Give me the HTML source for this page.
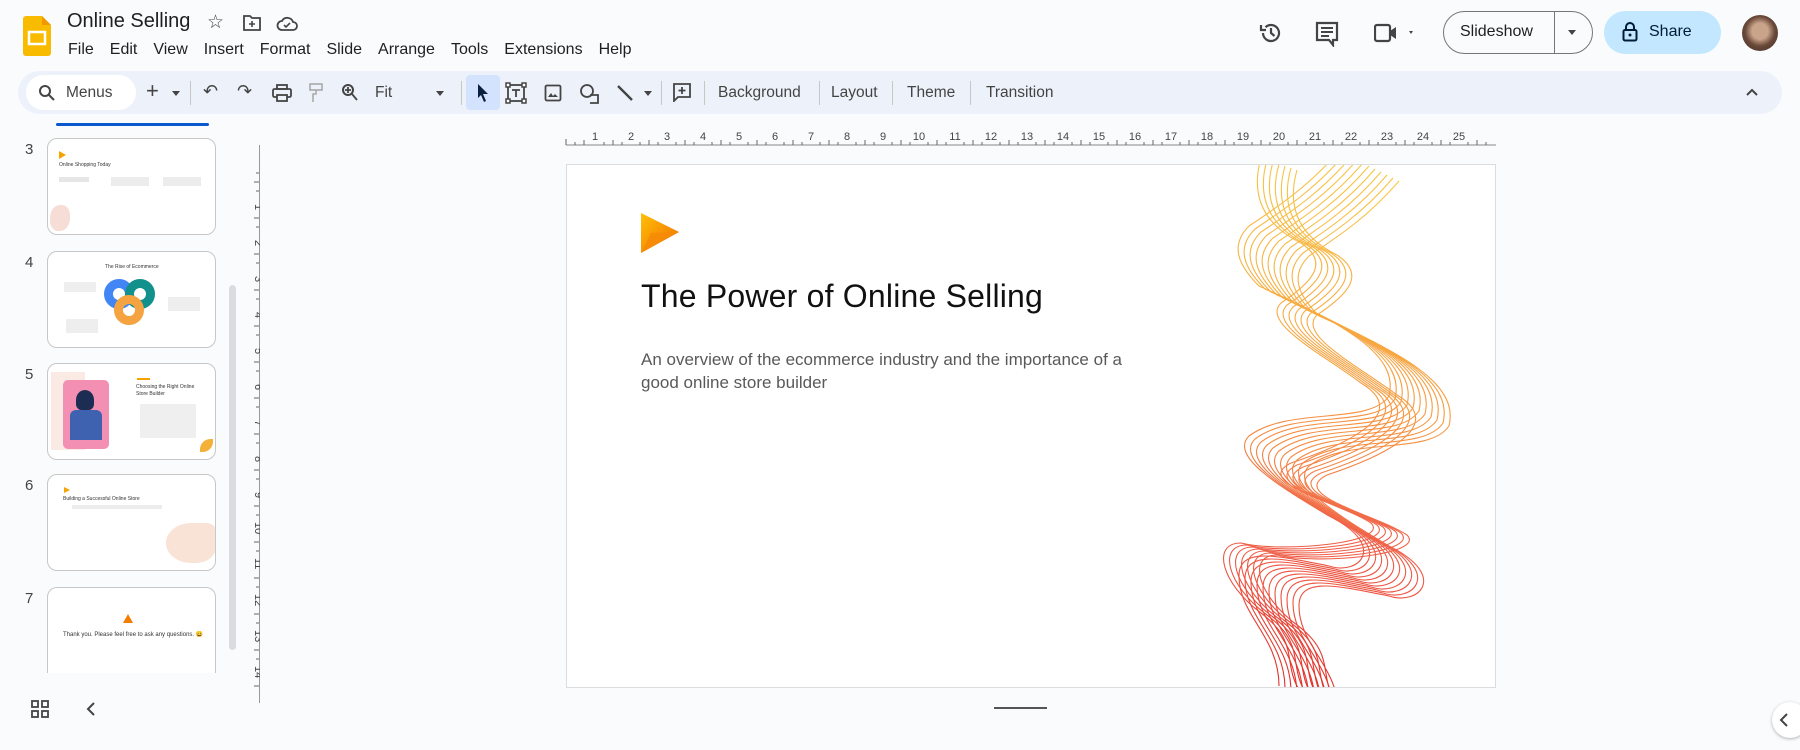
<!DOCTYPE html>
<html><head><meta charset="utf-8"><style>
*{box-sizing:border-box;margin:0;padding:0}
body{width:1800px;height:750px;overflow:hidden;background:#f9fbfd;font-family:"Liberation Sans",Arial,sans-serif;color:#1f1f1f;position:relative}
.a{position:absolute}
.menu span{margin-right:16px;font-size:16px}
.tb{left:18px;top:71px;width:1764px;height:43px;background:#edf2fa;border-radius:22px}
.ic{position:absolute;top:0}
.thumb{position:absolute;left:47px;width:169px;height:97px;background:#fff;border:1px solid #c7c7c7;border-radius:10px;overflow:hidden}
.num{position:absolute;left:25px;font-size:15px;color:#444}
.sep{position:absolute;top:10px;width:1px;height:24px;background:#c7c7c7}
.tt{position:absolute;top:13px;font-size:15.5px;color:#444}
</style></head><body>
<svg class="a" style="left:23px;top:16px" width="28" height="40" viewBox="0 0 28 40"><path d="M3 0h16l9 9v28a3 3 0 0 1-3 3H3a3 3 0 0 1-3-3V3a3 3 0 0 1 3-3z" fill="#f9bb00"/><path d="M19 0l9 9h-9z" fill="#f29900"/><rect x="6" y="16" width="16" height="12" fill="none" stroke="#fff" stroke-width="2.5"/></svg>
<div class="a" style="left:67px;top:10px;font-size:20px">Online Selling</div>
<div class="a" style="left:207px;top:11px;font-size:19px;color:#444">☆</div>
<svg class="a" style="left:242px;top:14px" width="20" height="18" viewBox="0 0 20 18"><path d="M2 2h6l2 2h8v12H2z" fill="none" stroke="#444" stroke-width="1.8"/><path d="M10 7v6M7 10h6" stroke="#444" stroke-width="1.6"/></svg>
<svg class="a" style="left:276px;top:14px" width="22" height="18" viewBox="0 0 22 18"><path d="M6 16h11a4 4 0 0 0 0-8 6 6 0 0 0-11-1A4.5 4.5 0 0 0 6 16z" fill="none" stroke="#444" stroke-width="1.8"/><path d="M8 11l2 2 4-4" fill="none" stroke="#444" stroke-width="1.6"/></svg>
<div class="a menu" style="left:68px;top:41px;white-space:nowrap"><span>File</span><span>Edit</span><span>View</span><span>Insert</span><span>Format</span><span>Slide</span><span>Arrange</span><span>Tools</span><span>Extensions</span><span>Help</span></div>

<svg class="a" style="left:1259px;top:21px" width="24" height="24" viewBox="0 0 24 24"><path d="M4 12a8 8 0 1 0 2.5-5.8" fill="none" stroke="#444" stroke-width="2.2"/><path d="M2 4v5h5" fill="none" stroke="#444" stroke-width="2.2"/><path d="M12 7v5l3.5 3" fill="none" stroke="#444" stroke-width="2.2"/></svg>
<svg class="a" style="left:1315px;top:21px" width="24" height="26" viewBox="0 0 24 26"><path d="M2 2h20v17h-4v5l-4-5H2z" fill="none" stroke="#444" stroke-width="2.2"/><path d="M6 7h12M6 11h12M6 15h8" stroke="#444" stroke-width="2"/></svg>
<svg class="a" style="left:1374px;top:23px" width="40" height="20" viewBox="0 0 40 20"><rect x="1" y="2" width="15" height="16" rx="2" fill="none" stroke="#444" stroke-width="2.2"/><path d="M16 8l6-4v12l-6-4z" fill="#444"/><path d="M35 8l4 0-2 3z" fill="#444"/></svg>
<div class="a" style="left:1443px;top:11px;width:150px;height:43px;border:1px solid #747775;border-radius:22px"></div>
<div class="a" style="left:1460px;top:23px;font-size:16px;color:#1f1f1f">Slideshow</div>
<div class="a" style="left:1554px;top:12px;width:1px;height:41px;background:#747775"></div>
<div class="a" style="left:1568px;top:30px;border:4px solid transparent;border-top:5px solid #444"></div>
<div class="a" style="left:1604px;top:11px;width:117px;height:43px;background:#c2e7ff;border-radius:22px"></div>
<svg class="a" style="left:1622px;top:22px" width="16" height="20" viewBox="0 0 16 20"><rect x="1.5" y="8" width="13" height="10.5" rx="1.5" fill="none" stroke="#001d35" stroke-width="2"/><path d="M4 8V5a4 4 0 0 1 8 0v3" fill="none" stroke="#001d35" stroke-width="2"/><circle cx="8" cy="13" r="1.5" fill="#001d35"/></svg>
<div class="a" style="left:1649px;top:23px;font-size:16px;color:#001d35">Share</div>
<div class="a" style="left:1742px;top:15px;width:36px;height:36px;border-radius:50%;background:radial-gradient(circle at 50% 45%,#c9a38a 0 30%,#6b4a3a 55%,#3a2a22)"></div>

<div class="a tb">
 <div class="a" style="left:8px;top:4px;width:110px;height:35px;background:#fff;border-radius:18px"></div>
 <svg class="ic" style="left:20px;top:13px" width="18" height="18" viewBox="0 0 18 18"><circle cx="7" cy="7" r="5" fill="none" stroke="#444" stroke-width="2"/><path d="M11 11l5 5" stroke="#444" stroke-width="2"/></svg>
 <div class="tt" style="left:48px;color:#444">Menus</div>
 <div class="tt" style="left:128px;top:7px;font-size:22px;color:#444">+</div>
 <div class="a" style="left:154px;top:20px;border:4px solid transparent;border-top:5px solid #444"></div>
 <div class="sep" style="left:172px"></div>
 <div class="tt" style="left:185px;top:10px;font-size:18px;color:#444">↶</div>
 <div class="tt" style="left:219px;top:10px;font-size:18px;color:#444">↷</div>
 <svg class="ic" style="left:254px;top:13px" width="20" height="18" viewBox="0 0 20 18"><rect x="5" y="1" width="10" height="4" fill="none" stroke="#444" stroke-width="1.8"/><rect x="1" y="5" width="18" height="8" rx="1.5" fill="none" stroke="#444" stroke-width="1.8"/><rect x="5" y="11" width="10" height="6" fill="#edf2fa" stroke="#444" stroke-width="1.8"/></svg>
 <svg class="ic" style="left:290px;top:12px" width="16" height="20" viewBox="0 0 16 20"><rect x="2" y="1" width="12" height="6" fill="none" stroke="#aaa" stroke-width="1.6"/><path d="M8 7v4H5v8" fill="none" stroke="#aaa" stroke-width="1.6"/></svg>
 <svg class="ic" style="left:323px;top:12px" width="18" height="20" viewBox="0 0 18 20"><circle cx="7" cy="7" r="5" fill="none" stroke="#444" stroke-width="2"/><path d="M11 11l5 6M7 4v6M4 7h6" stroke="#444" stroke-width="1.8"/></svg>
 <div class="tt" style="left:357px;color:#444">Fit</div>
 <div class="a" style="left:418px;top:20px;border:4px solid transparent;border-top:5px solid #444"></div>
 <div class="sep" style="left:443px"></div>
 <div class="a" style="left:448px;top:4px;width:34px;height:35px;background:#d3e3fd;border-radius:4px"></div>
 <svg class="ic" style="left:458px;top:12px" width="14" height="20" viewBox="0 0 14 20"><path d="M2 1l10 10H7l3 7-2 1-3-7-3 3z" fill="#0b1f3f"/></svg>
 <svg class="ic" style="left:487px;top:11px" width="22" height="22" viewBox="0 0 22 22"><rect x="3" y="3" width="16" height="16" fill="none" stroke="#444" stroke-width="1.8"/><rect x="1" y="1" width="4" height="4" fill="#fff" stroke="#444" stroke-width="1.5"/><rect x="17" y="1" width="4" height="4" fill="#fff" stroke="#444" stroke-width="1.5"/><rect x="1" y="17" width="4" height="4" fill="#fff" stroke="#444" stroke-width="1.5"/><rect x="17" y="17" width="4" height="4" fill="#fff" stroke="#444" stroke-width="1.5"/><path d="M7 8h8M11 8v7" stroke="#444" stroke-width="1.8"/></svg>
 <svg class="ic" style="left:526px;top:13px" width="18" height="18" viewBox="0 0 18 18"><rect x="1.5" y="1.5" width="15" height="15" rx="1.5" fill="none" stroke="#444" stroke-width="1.8"/><path d="M4 13l3-4 2 3 2-2 3 3z" fill="#444"/></svg>
 <svg class="ic" style="left:561px;top:12px" width="22" height="22" viewBox="0 0 22 22"><circle cx="8" cy="8" r="6" fill="none" stroke="#444" stroke-width="1.8"/><path d="M11 12h8v8h-8" fill="none" stroke="#444" stroke-width="1.8"/></svg>
 <svg class="ic" style="left:598px;top:13px" width="18" height="18" viewBox="0 0 18 18"><path d="M2 2l14 14" stroke="#444" stroke-width="2.4"/></svg>
 <div class="a" style="left:626px;top:20px;border:4px solid transparent;border-top:5px solid #444"></div>
 <div class="sep" style="left:643px"></div>
 <svg class="ic" style="left:654px;top:11px" width="20" height="20" viewBox="0 0 20 20"><path d="M2 2h16v13H6l-4 4z" fill="none" stroke="#444" stroke-width="1.8"/><path d="M10 5v7M6.5 8.5h7" stroke="#444" stroke-width="1.8"/></svg>
 <div class="sep" style="left:686px"></div>
 <div class="tt" style="left:700px">Background</div>
 <div class="sep" style="left:801px"></div>
 <div class="tt" style="left:813px">Layout</div>
 <div class="sep" style="left:874px"></div>
 <div class="tt" style="left:889px">Theme</div>
 <div class="sep" style="left:952px"></div>
 <div class="tt" style="left:968px">Transition</div>
 <svg class="ic" style="left:1727px;top:16px" width="14" height="10" viewBox="0 0 14 10"><path d="M2 8l5-5 5 5" fill="none" stroke="#444" stroke-width="2"/></svg>
</div>

<div class="a" style="left:56px;top:123px;width:153px;height:3px;background:#0b57d0;border-radius:2px"></div>
<div class="num" style="top:141px">3</div>
<div class="thumb" style="top:138px">
 <div class="a" style="left:11px;top:12px;border:4px solid transparent;border-left:7px solid #f4a300"></div>
 <div class="a" style="left:11px;top:23px;font-size:5px;color:#333">Online Shopping Today</div>
 <div class="a" style="left:11px;top:38px;width:30px;height:5px;background:#e6e6e6"></div>
 <div class="a" style="left:63px;top:38px;width:38px;height:9px;background:#ececec"></div>
 <div class="a" style="left:115px;top:38px;width:38px;height:9px;background:#ececec"></div>
 <div class="a" style="left:2px;top:66px;width:20px;height:26px;background:#f6ddd6;border-radius:50% 40% 50% 40%"></div>
</div>
<div class="num" style="top:254px">4</div>
<div class="thumb" style="top:251px">
 <div class="a" style="left:57px;top:12px;font-size:5px;color:#333">The Rise of Ecommerce</div>
 <div class="a" style="left:56px;top:27px;width:30px;height:30px;border-radius:50%;border:9px solid #4285f4"></div>
 <div class="a" style="left:77px;top:27px;width:30px;height:30px;border-radius:50%;border:9px solid #11908c"></div>
 <div class="a" style="left:66px;top:43px;width:30px;height:30px;border-radius:50%;border:9px solid #f4a340"></div>
 <div class="a" style="left:16px;top:30px;width:32px;height:10px;background:#eee"></div>
 <div class="a" style="left:18px;top:67px;width:32px;height:14px;background:#eee"></div>
 <div class="a" style="left:120px;top:45px;width:32px;height:14px;background:#eee"></div>
</div>
<div class="num" style="top:366px">5</div>
<div class="thumb" style="top:363px">
 <div class="a" style="left:3px;top:8px;width:34px;height:78px;background:#fbeae4"></div>
 <div class="a" style="left:15px;top:16px;width:46px;height:69px;background:#f28fb2;border-radius:5px"></div>
 <div class="a" style="left:28px;top:26px;width:18px;height:20px;background:#1d2c52;border-radius:50% 50% 30% 30%"></div>
 <div class="a" style="left:22px;top:46px;width:32px;height:30px;background:#3e61b0;border-radius:6px 6px 0 0"></div>
 <div class="a" style="left:89px;top:14px;width:13px;height:2px;background:#f4a300"></div>
 <div class="a" style="left:88px;top:20px;font-size:5px;color:#333;line-height:7px">Choosing the Right Online<br>Store Builder</div>
 <div class="a" style="left:92px;top:40px;width:56px;height:34px;background:#efefef"></div>
 <div class="a" style="left:152px;top:75px;width:13px;height:13px;background:#f4b13a;border-radius:80% 0 80% 0"></div>
</div>
<div class="num" style="top:477px">6</div>
<div class="thumb" style="top:474px">
 <div class="a" style="left:16px;top:12px;border:3px solid transparent;border-left:6px solid #f4a300"></div>
 <div class="a" style="left:15px;top:21px;font-size:5px;color:#333">Building a Successful Online Store</div>
 <div class="a" style="left:24px;top:30px;width:90px;height:4px;background:#ececec"></div>
 <div class="a" style="left:118px;top:48px;width:50px;height:40px;background:#f9e2d6;border-radius:50% 20% 40% 50%"></div>
</div>
<div class="num" style="top:590px">7</div>
<div class="thumb" style="top:587px;height:86px;border-bottom:none;border-radius:10px 10px 0 0">
 <div class="a" style="left:75px;top:21px;border:5px solid transparent;border-bottom:9px solid #f47c00"></div>
 <div class="a" style="left:15px;top:43px;font-size:6px;color:#333">Thank you. Please feel free to ask any questions. 😀</div>
</div>
<div class="a" style="left:229px;top:285px;width:7px;height:365px;background:#dadce0;border-radius:4px"></div>
<svg class="a" style="left:31px;top:700px" width="18" height="18" viewBox="0 0 18 18"><g fill="none" stroke="#444" stroke-width="1.8"><rect x="1" y="1" width="6" height="6"/><rect x="11" y="1" width="6" height="6"/><rect x="1" y="11" width="6" height="6"/><rect x="11" y="11" width="6" height="6"/></g></svg>
<svg class="a" style="left:86px;top:702px" width="10" height="14" viewBox="0 0 10 14"><path d="M8 1L2 7l6 6" fill="none" stroke="#444" stroke-width="2"/></svg>

<svg class="a" style="left:260px;top:128px" width="1240" height="18">
 <line x1="306" y1="17" x2="1236" y2="17" stroke="#888"/>
 <g fill="#444" font-size="11" font-family="Liberation Sans">
 <text x="335" y="12" text-anchor="middle">1</text><text x="371" y="12" text-anchor="middle">2</text><text x="407" y="12" text-anchor="middle">3</text><text x="443" y="12" text-anchor="middle">4</text><text x="479" y="12" text-anchor="middle">5</text><text x="515" y="12" text-anchor="middle">6</text><text x="551" y="12" text-anchor="middle">7</text><text x="587" y="12" text-anchor="middle">8</text><text x="623" y="12" text-anchor="middle">9</text><text x="659" y="12" text-anchor="middle">10</text><text x="695" y="12" text-anchor="middle">11</text><text x="731" y="12" text-anchor="middle">12</text><text x="767" y="12" text-anchor="middle">13</text><text x="803" y="12" text-anchor="middle">14</text><text x="839" y="12" text-anchor="middle">15</text><text x="875" y="12" text-anchor="middle">16</text><text x="911" y="12" text-anchor="middle">17</text><text x="947" y="12" text-anchor="middle">18</text><text x="983" y="12" text-anchor="middle">19</text><text x="1019" y="12" text-anchor="middle">20</text><text x="1055" y="12" text-anchor="middle">21</text><text x="1091" y="12" text-anchor="middle">22</text><text x="1127" y="12" text-anchor="middle">23</text><text x="1163" y="12" text-anchor="middle">24</text><text x="1199" y="12" text-anchor="middle">25</text>
 </g>
 <path d="M306 17v-6M315 17v-3M324 17v-5M344 17v-3M353 17v-5M362 17v-3M380 17v-3M389 17v-5M398 17v-3M416 17v-3M425 17v-5M434 17v-3M452 17v-3M461 17v-5M470 17v-3M488 17v-3M497 17v-5M506 17v-3M524 17v-3M533 17v-5M542 17v-3M560 17v-3M569 17v-5M578 17v-3M596 17v-3M605 17v-5M614 17v-3M632 17v-3M641 17v-5M650 17v-3M668 17v-3M677 17v-5M686 17v-3M704 17v-3M713 17v-5M722 17v-3M740 17v-3M749 17v-5M758 17v-3M776 17v-3M785 17v-5M794 17v-3M812 17v-3M821 17v-5M830 17v-3M848 17v-3M857 17v-5M866 17v-3M884 17v-3M893 17v-5M902 17v-3M920 17v-3M929 17v-5M938 17v-3M956 17v-3M965 17v-5M974 17v-3M992 17v-3M1001 17v-5M1010 17v-3M1028 17v-3M1037 17v-5M1046 17v-3M1064 17v-3M1073 17v-5M1082 17v-3M1100 17v-3M1109 17v-5M1118 17v-3M1136 17v-3M1145 17v-5M1154 17v-3M1172 17v-3M1181 17v-5M1190 17v-3M1208 17v-3M1217 17v-5M1226 17v-3" stroke="#666"/>
</svg>
<div class="a" style="left:259px;top:145px;width:1px;height:558px;background:#999"></div>
<svg class="a" style="left:240px;top:160px" width="20" height="540">
 <g fill="#444" font-size="11" font-family="Liberation Sans">
 <text transform="translate(15,44) rotate(90)">1</text><text transform="translate(15,80) rotate(90)">2</text><text transform="translate(15,116) rotate(90)">3</text><text transform="translate(15,152) rotate(90)">4</text><text transform="translate(15,188) rotate(90)">5</text><text transform="translate(15,224) rotate(90)">6</text><text transform="translate(15,260) rotate(90)">7</text><text transform="translate(15,296) rotate(90)">8</text><text transform="translate(15,332) rotate(90)">9</text><text transform="translate(15,362) rotate(90)">10</text><text transform="translate(15,398) rotate(90)">11</text><text transform="translate(15,434) rotate(90)">12</text><text transform="translate(15,470) rotate(90)">13</text><text transform="translate(15,506) rotate(90)">14</text>
 </g>
 <path d="M19 13h-3M19 22h-5M19 31h-3M19 58h-5M19 67h-3M19 94h-5M19 103h-3M19 130h-5M19 139h-3M19 166h-5M19 175h-3M19 202h-5M19 211h-3M19 238h-5M19 247h-3M19 274h-5M19 283h-3M19 310h-5M19 319h-3M19 346h-5M19 355h-3M19 382h-5M19 391h-3M19 418h-5M19 427h-3M19 454h-5M19 463h-3M19 490h-5M19 499h-3M19 526h-5" stroke="#666"/>
</svg>

<div class="a" style="left:566px;top:164px;width:930px;height:524px;background:#fff;border:1px solid #dadce0;overflow:hidden">
 <svg class="a" style="left:74px;top:48px" width="38" height="40" viewBox="0 0 38 40"><defs><linearGradient id="lg" x1="0" y1="0" x2="1" y2="1"><stop offset="0" stop-color="#ffc107"/><stop offset="1" stop-color="#f26a00"/></linearGradient></defs><path d="M0 0l38 19L0 40z" fill="url(#lg)"/><path d="M0 40l38-21L10 20z" fill="#f58a07" opacity=".8"/></svg>
 <div class="a" style="left:74px;top:113px;font-size:32px;color:#111;letter-spacing:.2px;white-space:nowrap">The Power of Online Selling</div>
 <div class="a" style="left:74px;top:183px;font-size:17px;color:#595959;line-height:23px;width:520px">An overview of the ecommerce industry and the importance of a good online store builder</div>
 <svg class="a" style="left:0;top:0" width="930" height="524">
  <defs><linearGradient id="wg" gradientUnits="userSpaceOnUse" x1="0" y1="0" x2="0" y2="524"><stop offset="0" stop-color="#f7c544"/><stop offset=".45" stop-color="#f79a3e"/><stop offset=".7" stop-color="#f0624a"/><stop offset="1" stop-color="#e0302a"/></linearGradient></defs>
  <g fill="none" stroke="url(#wg)" stroke-width="1.1">
   <g id="w1"><path d="M790 -5C760 30 730 50 700 70 C680 90 690 110 710 130 C800 170 850 200 840 240 C820 270 740 250 700 280 C680 300 730 330 780 360 C840 390 810 420 780 410 C730 400 690 390 690 420 C690 460 730 480 730 530"/></g>
   <use href="#w1" transform="translate(6,3)"/><use href="#w1" transform="translate(12,6)"/><use href="#w1" transform="translate(18,9)"/><use href="#w1" transform="translate(24,12)"/><use href="#w1" transform="translate(30,15)"/><use href="#w1" transform="translate(36,18)"/><use href="#w1" transform="translate(42,21)"/><use href="#w1" transform="translate(-6,-3)"/><use href="#w1" transform="translate(-12,-6)"/><use href="#w1" transform="translate(-18,-9)"/>
   <g id="w2"><path d="M700 -5C690 30 700 60 740 80 C770 100 750 120 720 140 C700 160 760 190 800 220 C850 250 790 280 730 300 C690 320 780 340 810 360 C830 380 720 390 680 380 C650 380 660 420 700 450 C740 480 720 500 740 530"/></g>
   <use href="#w2" transform="translate(6,2)"/><use href="#w2" transform="translate(12,4)"/><use href="#w2" transform="translate(18,6)"/><use href="#w2" transform="translate(24,8)"/><use href="#w2" transform="translate(30,10)"/><use href="#w2" transform="translate(-6,-2)"/>
  </g>
 </svg>
</div>
<div class="a" style="left:994px;top:707px;width:53px;height:2px;background:#555"></div>
<div class="a" style="left:1772px;top:702px;width:36px;height:36px;border-radius:50%;background:#fff;box-shadow:0 1px 3px rgba(0,0,0,.3)"></div>
<svg class="a" style="left:1779px;top:713px" width="10" height="14" viewBox="0 0 10 14"><path d="M8 1L2 7l6 6" fill="none" stroke="#444" stroke-width="2"/></svg>
</body></html>
